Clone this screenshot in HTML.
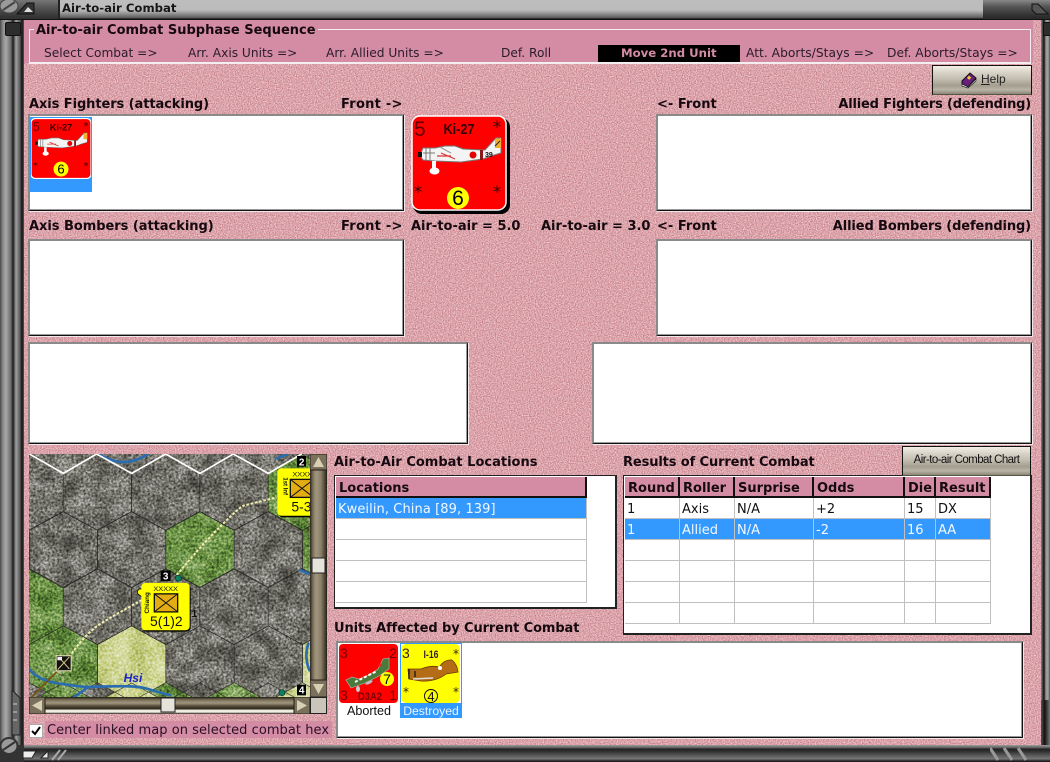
<!DOCTYPE html>
<html><head><meta charset="utf-8"><title>Air-to-air Combat</title>
<style>
html,body{margin:0;padding:0;background:#333}
#p{position:relative;width:1050px;height:762px;overflow:hidden;font-family:"DejaVu Sans","Liberation Sans",sans-serif;font-size:12px;color:#1a0d12}
#p div,#p span.t,#p svg.a{position:absolute}
.t{position:absolute;white-space:nowrap;line-height:15px}
.b{font-weight:bold;font-size:13px;color:#160a10}
.s{font-size:12.3px;color:#2a1c2a}
.box{background:#fff;box-sizing:border-box;border:2px solid;border-color:#8a8a8a #111 #111 #8a8a8a;border-right-width:1px;border-bottom-width:1px;box-shadow:inset -1px -1px 0 #999,1px 1px 0 #f3e6e8}
.box2{background:#fff;box-sizing:border-box;border:1px solid #222;border-right-width:2px;border-bottom-width:2px}
.th{background:#d48ca5;box-sizing:border-box;border-right:2px solid #111;border-bottom:2px solid #111;font-weight:bold;font-size:13px;line-height:23px;padding-left:3px;color:#160a10;white-space:nowrap}
.td{box-sizing:border-box;border-right:1px solid #c0c0c0;border-bottom:1px solid #c0c0c0;background:#fff;font-size:13px;line-height:23px;padding-left:2px;color:#111;white-space:nowrap}
.sel{background:#3399ff;color:#f2f8ff}
.btn{box-sizing:border-box;border:1px solid #111;border-bottom-color:#554;background:linear-gradient(#f3efe6 0%,#d6d1c5 25%,#c4bfb2 45%,#a39e8e 70%,#b9b4a6 85%,#8a8575 100%);text-align:center;color:#111;font-family:"Liberation Sans",sans-serif}
</style></head><body>
<div id="p">
<svg class="a" style="left:0;top:0" width="1050" height="762">
<defs><filter id="pn" x="0" y="0" width="100%" height="100%" color-interpolation-filters="sRGB">
<feTurbulence type="fractalNoise" baseFrequency="0.85" numOctaves="2" seed="4"/>
<feColorMatrix values="0.4 0 0 0 0.66  0.62 0 0 0 0.33  0.62 0 0 0 0.36  0 0 0 0 1"/></filter></defs>
<rect x="24" y="20" width="1017" height="725" fill="#d9a0a8" filter="url(#pn)"/>
</svg>

<!-- title bar -->
<div style="left:0;top:0;width:1050px;height:20px;background:linear-gradient(#bdbdbd 0%,#bcbcbc 50%,#9a9a9a 65%,#5e5e5e 88%,#111 95%,#111 100%)"></div>
<div style="left:0;top:0;width:59px;height:19px;background:linear-gradient(#777,#555 40%,#333 90%)"></div>
<div style="left:58px;top:0;width:2px;height:19px;background:#222"></div>
<div style="left:983px;top:0;width:67px;height:19px;background:linear-gradient(#888,#555 35%,#2b2b2b 90%)"></div>
<svg class="a" style="left:0;top:0" width="60" height="20"><ellipse cx="9" cy="6" rx="9" ry="7" fill="#999" stroke="#444"/><path d="M3 10L15 2" stroke="#444" stroke-width="2"/><path d="M17 14L27 3H34V14Z" fill="#333" stroke="#111"/><path d="M24 12L28 7 33 12Z" fill="#ddd"/></svg>
<svg class="a" style="left:1030px;top:0" width="20" height="20"><path d="M2 4H8L18 14H6L2 10Z" fill="#555" stroke="#111"/></svg>
<span class="t" style="left:62px;top:1px;font-size:11.7px;font-weight:bold;color:#161616">Air-to-air Combat</span>

<!-- left frame -->
<div style="left:0;top:20px;width:24px;height:725px;background:linear-gradient(90deg,#4a4a4a 0,#8c8c8c 3px,#a8a8a8 6px,#6a6a6a 11px,#1a1a1a 13px,#444 14px,#a0a0a0 16px,#5a5a5a 20px,#111 22px,#555 24px)"></div>
<div style="left:5px;top:22px;width:14px;height:12px;background:#2d2d2d;border:1px solid #111;border-radius:2px"></div>
<svg class="a" style="left:0;top:690px" width="24" height="72"><path d="M12 0L20 8V45H12Z" fill="#666" stroke="#222"/><path d="M13 14h4M13 22h4M13 30h4" stroke="#ccc"/><ellipse cx="9" cy="56" rx="8.500" ry="8" fill="#999" stroke="#333" stroke-width="2"/><path d="M3 60L15 52" stroke="#333" stroke-width="2"/><rect x="0" y="66" width="24" height="6" fill="#333"/></svg>
<!-- right frame -->
<div style="left:1041px;top:20px;width:9px;height:725px;background:linear-gradient(90deg,#888 0,#333 2px,#111 3px,#999 5px,#a0a0a0 7px,#555 9px)"></div>
<div style="left:1043px;top:22px;width:7px;height:12px;background:#2d2d2d;border:1px solid #111;border-right:0"></div>
<div style="left:1041px;top:700px;width:9px;height:62px;background:linear-gradient(90deg,#555,#111 40%,#777)"></div>
<!-- bottom frame -->
<div style="left:24px;top:745px;width:1026px;height:17px;background:linear-gradient(#999 0,#888 1px,#555 3px,#222 4px,#2d2d2d 6px,#555 10px,#777 14px,#444 15px,#111 17px)"></div>
<svg class="a" style="left:20px;top:746px" width="100" height="16"><path d="M3 5H16L12 12H3Z" fill="#eee" stroke="#222"/><path d="M21 12L28 5V12Z" fill="#eee" stroke="#222"/><path d="M32 14L40 4M38 14L46 4" stroke="#aaa" stroke-width="2"/></svg>
<svg class="a" style="left:990px;top:746px" width="52" height="16"><path d="M0 2L8 14M14 2L22 14M28 2L36 14" stroke="#999" stroke-width="3"/></svg>

<!-- sequence group -->
<div style="left:24px;top:20px;width:1009px;height:43px;background:#d48ca5"></div>
<div style="left:29px;top:29px;width:1002px;height:35px;border:1px solid #f4eef0;border-bottom-width:2px;box-sizing:border-box"></div>
<span class="t" style="left:34px;top:23px;background:#d48ca5;padding:0 2px;font-size:13px;font-weight:bold;color:#160a10">Air-to-air Combat Subphase Sequence</span>
<span class="t s" style="left:44px;top:46px;font-size:12.2px">Select Combat =&gt;</span>
<span class="t s" style="left:188px;top:46px;font-size:12.2px">Arr. Axis Units =&gt;</span>
<span class="t s" style="left:326px;top:46px;font-size:12.2px">Arr. Allied Units =&gt;</span>
<span class="t s" style="left:501px;top:46px;font-size:12.2px">Def. Roll</span>
<div style="left:598px;top:45px;width:142px;height:17px;background:#000"></div>
<span class="t" style="left:621px;top:46px;font-size:11.7px;font-weight:bold;color:#d48ca5">Move 2nd Unit</span>
<span class="t s" style="left:746px;top:46px">Att. Aborts/Stays =&gt;</span>
<span class="t s" style="left:887px;top:46px">Def. Aborts/Stays =&gt;</span>

<!-- help -->
<div class="btn" style="left:932px;top:65px;width:100px;height:30px"></div>
<svg class="a" style="left:960px;top:71px" width="18" height="18"><path d="M2 10L10 2 16 7 8 16 2 13Z" fill="#6a1f7a" stroke="#111"/><path d="M2 13L8 16 16 8V10L8 17 2 15Z" fill="#eee" stroke="#111" stroke-width=".6"/><rect x="8" y="5" width="3" height="3" fill="#ec3" transform="rotate(40 9 6)"/></svg>
<span class="t" style="left:981px;top:72px;font-family:'Liberation Sans',sans-serif;font-size:12px;color:#222"><u>H</u>elp</span>

<!-- headings -->
<span class="t b" style="left:29px;top:97px;letter-spacing:-.08px">Axis Fighters (attacking)</span>
<span class="t b" style="left:341px;top:97px;letter-spacing:.25px">Front -&gt;</span>
<span class="t b" style="left:657px;top:97px">&lt;- Front</span>
<span class="t b" style="right:19px;top:97px;letter-spacing:-.19px">Allied Fighters (defending)</span>
<span class="t b" style="left:29px;top:219px;letter-spacing:-.04px">Axis Bombers (attacking)</span>
<span class="t b" style="left:341px;top:219px;letter-spacing:.25px">Front -&gt;</span>
<span class="t b" style="left:411px;top:219px">Air-to-air = 5.0</span>
<span class="t b" style="left:541px;top:219px">Air-to-air = 3.0</span>
<span class="t b" style="left:657px;top:219px">&lt;- Front</span>
<span class="t b" style="right:19px;top:219px;letter-spacing:-.12px">Allied Bombers (defending)</span>

<!-- boxes -->
<div class="box" style="left:28px;top:114px;width:376px;height:97px"></div>
<div class="box" style="left:656px;top:114px;width:376px;height:97px"></div>
<div class="box" style="left:28px;top:239px;width:376px;height:97px"></div>
<div class="box" style="left:656px;top:239px;width:376px;height:97px"></div>
<div class="box" style="left:28px;top:342px;width:440px;height:102px"></div>
<div class="box" style="left:592px;top:342px;width:440px;height:102px"></div>

<!-- small Ki-27 -->
<div style="left:30px;top:117px;width:62px;height:62px;background:#3399ff"></div>
<div style="left:30px;top:179px;width:62px;height:13px;background:#3399ff"></div>
<svg class="a" style="left:31px;top:118px" width="60" height="61" viewBox="0 0 96 96">
<rect width="96" height="96" rx="7" fill="#fe0000" stroke="#fff" stroke-width="2"/>
<path d="M10 38L12 33 24 33 29 32 34 31 44 31 52 34 72 35 74 35 85 23 90 23 90 38 80 41 72 44 50 47 24 46 12 45 10 42Z" fill="#f4f4f4" stroke="#666"/>
<path d="M84 24L90 23 90 33 84 33Z" fill="#eeb030"/><circle cx="62" cy="40" r="4" fill="#e40000"/><rect x="69" y="35" width="3" height="10" fill="#8a1818"/><path d="M7 37h4v5H7z" fill="#111"/><path d="M15 33V45M19 33V45" stroke="#777"/><path d="M26 41H40M30 38L44 44" stroke="#d33" stroke-width="1.200"/><path d="M23 46V54" stroke="#fff" stroke-width="4"/><ellipse cx="23.500" cy="56" rx="5" ry="3.500" fill="#fff"/>
<circle cx="48" cy="81" r="12" fill="#ff0"/>
<text x="48" y="88" text-anchor="middle" font-family="Liberation Sans" font-size="21">6</text>
<text x="3" y="20" font-family="Liberation Sans" font-size="20" fill="#700">5</text>
<text x="48" y="19" text-anchor="middle" font-family="Liberation Sans" font-weight="bold" font-size="15" fill="#300" textLength="36" lengthAdjust="spacingAndGlyphs">Ki-27</text>
<text x="92" y="17" text-anchor="end" font-size="16" fill="#300">*</text><text x="3" y="81" font-size="16" fill="#300">*</text><text x="92" y="81" text-anchor="end" font-size="16" fill="#300">*</text>
</svg>

<!-- large Ki-27 -->
<div style="left:413px;top:118px;width:97px;height:96px;background:#000;border-radius:9px"></div>
<svg class="a" style="left:411px;top:115px" width="96" height="96" viewBox="0 0 96 96">
<rect x="1" y="1" width="94" height="94" rx="8" fill="#fe0000" stroke="#fff" stroke-width="1.500"/>
<path d="M10 38L12 33 24 33 29 32 34 31 44 31 52 34 72 35 74 35 85 23 90 23 90 38 80 41 72 44 50 47 24 46 12 45 10 42Z" fill="#f4f4f4" stroke="#777"/>
<path d="M84 24L90 23 90 33 84 33Z" fill="#eeb030"/><path d="M84 31L89 26" stroke="#222"/><circle cx="62" cy="40" r="3.500" fill="#e40000"/><rect x="69" y="35" width="3" height="10" fill="#8a1818"/><path d="M7 37h4v5H7z" fill="#111"/><path d="M15 33V45M19 33V45M12 38H24" stroke="#777"/><path d="M26 41H40M30 38L44 44" stroke="#d33" stroke-width="1.200"/><path d="M29 32L40 38" stroke="#999"/><path d="M23 46V54" stroke="#fff" stroke-width="4"/><ellipse cx="23.500" cy="56" rx="5" ry="3.500" fill="#fff"/>
<text x="74" y="42" font-family="Liberation Sans" font-weight="bold" font-size="7" fill="#111">39</text>
<circle cx="47" cy="83" r="11" fill="#ff0"/>
<text x="47" y="90" text-anchor="middle" font-family="Liberation Sans" font-size="21">6</text>
<text x="3" y="21" font-family="Liberation Sans" font-size="21" fill="#600">5</text>
<text x="48" y="19" text-anchor="middle" font-family="Liberation Sans" font-weight="bold" font-size="15" fill="#300" textLength="31" lengthAdjust="spacingAndGlyphs">Ki-27</text>
<text x="90" y="17" text-anchor="end" font-size="16" fill="#300">*</text><text x="3" y="82" font-size="16" fill="#300">*</text><text x="90" y="82" text-anchor="end" font-size="16" fill="#300">*</text>
</svg>

<!-- map -->
<svg class="a" style="left:29px;top:454px" width="281" height="243" viewBox="87 42 843 728" preserveAspectRatio="none">
<defs>
<polygon id="h" points="0,-113 102.5,-57 102.5,57 0,113 -102.500,57 -102.500,-57"/>
<filter id="mn" x="0" y="0" width="100%" height="100%" color-interpolation-filters="sRGB">
<feTurbulence type="fractalNoise" baseFrequency="0.14" numOctaves="3" seed="8"/>
<feColorMatrix values="1.400 0 0 0 -0.2  1.400 0 0 0 -0.2  1.400 0 0 0 -0.2  0 0 0 0 1"/></filter>
<filter id="mb" x="0" y="0" width="100%" height="100%" color-interpolation-filters="sRGB">
<feTurbulence type="fractalNoise" baseFrequency="0.018" numOctaves="2" seed="3"/>
<feColorMatrix values="1.800 0 0 0 -0.4  1.800 0 0 0 -0.4  1.800 0 0 0 -0.4  0 0 0 0 1"/></filter>
<clipPath id="mc"><rect x="87" y="42" width="843" height="728"/></clipPath>
</defs>
<g clip-path="url(#mc)">
<rect x="87" y="42" width="843" height="728" fill="#73726a"/>
<g fill="#73726a">
<use href="#h" x="190" y="-14"/><use href="#h" x="395" y="-14"/><use href="#h" x="600" y="-14"/><use href="#h" x="805" y="-14"/>
</g>
<g fill="#6e9448">
<use href="#h" x="907" y="157"/><use href="#h" x="600" y="328"/><use href="#h" x="1010" y="328"/><use href="#h" x="87" y="500"/><use href="#h" x="190" y="670"/><use href="#h" x="190" y="841"/><use href="#h" x="497" y="841"/><use href="#h" x="702" y="841"/><use href="#h" x="-15" y="670"/>
</g>
<g fill="#cdd490">
<use href="#h" x="395" y="670"/><use href="#h" x="1010" y="670"/><use href="#h" x="395" y="841"/><use href="#h" x="907" y="841"/>
</g>
<rect x="87" y="42" width="843" height="728" fill="#888" filter="url(#mb)" style="mix-blend-mode:soft-light" opacity=".55"/>
<rect x="87" y="42" width="843" height="728" fill="#888" filter="url(#mn)" style="mix-blend-mode:overlay" opacity=".65"/>
<g fill="none" stroke="#222" stroke-width="1.600">
<use href="#h" x="87" y="157"/><use href="#h" x="292" y="157"/><use href="#h" x="497" y="157"/><use href="#h" x="702" y="157"/><use href="#h" x="907" y="157"/>
<use href="#h" x="-15" y="328"/><use href="#h" x="190" y="328"/><use href="#h" x="395" y="328"/><use href="#h" x="600" y="328"/><use href="#h" x="805" y="328"/><use href="#h" x="1010" y="328"/>
<use href="#h" x="87" y="500"/><use href="#h" x="292" y="500"/><use href="#h" x="497" y="500"/><use href="#h" x="702" y="500"/><use href="#h" x="907" y="500"/>
<use href="#h" x="190" y="670"/><use href="#h" x="395" y="670"/><use href="#h" x="600" y="670"/><use href="#h" x="805" y="670"/><use href="#h" x="1010" y="670"/>
<use href="#h" x="190" y="841"/><use href="#h" x="395" y="841"/><use href="#h" x="600" y="841"/><use href="#h" x="805" y="841"/>
</g>
<g fill="none" stroke="#2a6cb0" stroke-width="8" stroke-linecap="round" stroke-linejoin="round">
<path d="M300 45Q340 68 375 66T445 42M832 55L862 42"/>
<path d="M87 685Q110 720 180 730T260 740 340 738 440 745 510 765"/>
<path d="M220 772L262 742M900 390L930 402M925 610Q912 650 928 690"/>
</g>
<path d="M95 770L170 695" stroke="#7a4f14" stroke-width="5"/>
<path d="M215 640Q260 575 310 545T425 480" fill="none" stroke="#f2eeb0" stroke-width="6" stroke-dasharray="8 5"/>
<path d="M530 405Q600 320 660 260T730 197 830 172" fill="none" stroke="#f2eeb0" stroke-width="6" stroke-dasharray="8 5"/>
<path d="M88 42L190 100 290 42 395 100 497 42 600 100 700 42 805 100 905 42" fill="none" stroke="#fff" stroke-width="5"/>
<rect x="167" y="645" width="48" height="48" fill="#f2e7bd"/><rect x="170" y="648" width="42" height="42" fill="#111"/><path d="M173 688L208 650M178 652L208 686" stroke="#d8c480" stroke-width="3"/><path d="M172 650h14v10h-14z" fill="#eee"/>
<text x="184" y="709" text-anchor="middle" font-family="Liberation Sans" font-size="11" fill="#111">Tin</text>
<text x="399" y="725" text-anchor="middle" font-family="Liberation Sans" font-style="italic" font-weight="bold" font-size="36" fill="#1a22c8">Hsi</text>
<text x="575" y="530" font-family="Liberation Sans" font-weight="bold" font-size="30" fill="#111">1</text>
<rect x="891" y="48" width="27" height="32" fill="#000"/><text x="905" y="76" text-anchor="middle" font-family="Liberation Sans" font-weight="bold" font-size="30" fill="#fff">2</text>
<rect x="482" y="391" width="30" height="32" fill="#000"/><text x="497" y="418" text-anchor="middle" font-family="Liberation Sans" font-weight="bold" font-size="30" fill="#fff">3</text>
<rect x="891" y="733" width="27" height="32" fill="#000"/><text x="905" y="760" text-anchor="middle" font-family="Liberation Sans" font-weight="bold" font-size="30" fill="#fff">4</text>
<circle cx="535" cy="414" r="9" fill="#0d8060" stroke="#033" stroke-width="2"/><circle cx="846" cy="757" r="9" fill="#0d8060" stroke="#033" stroke-width="2"/>
<!-- Chiang -->
<path d="M414 462a10 10 0 0 1 14-14v24z" fill="#ff0" stroke="#111" stroke-width="3"/>
<rect x="428" y="432" width="144" height="142" rx="12" fill="#000"/>
<rect x="424" y="428" width="145" height="142" rx="12" fill="#ff0"/>
<text x="497" y="452" text-anchor="middle" font-family="Liberation Sans" font-size="20" fill="#111" textLength="74" lengthAdjust="spacingAndGlyphs">XXXXX</text>
<rect x="463" y="461" width="70" height="54" fill="#e2ac12" stroke="#111" stroke-width="4"/><path d="M463 461L533 515M533 461L463 515" stroke="#111" stroke-width="3"/>
<text transform="translate(447,520) rotate(-90)" font-family="Liberation Sans" font-weight="bold" font-size="18" fill="#111" textLength="64" lengthAdjust="spacingAndGlyphs">Chiang</text>
<text x="499" y="558" text-anchor="middle" font-family="Liberation Sans" font-size="42" fill="#111">5(1)2</text>
<!-- 1st Inf -->
<rect x="836" y="90" width="110" height="142" rx="12" fill="#000"/>
<rect x="832" y="85" width="110" height="142" rx="12" fill="#ff0"/>
<text x="877" y="109" font-family="Liberation Sans" font-size="20" fill="#111" textLength="74" lengthAdjust="spacingAndGlyphs">XXXXX</text>
<rect x="871" y="118" width="70" height="54" fill="#e2ac12" stroke="#111" stroke-width="4"/><path d="M871 118L941 172M941 118L871 172" stroke="#111" stroke-width="3"/>
<text transform="translate(850,112) rotate(90)" font-family="Liberation Sans" font-weight="bold" font-size="18" fill="#111">1st Inf</text>
<text x="874" y="215" font-family="Liberation Sans" font-size="42" fill="#111">5-3</text>
</g>
</svg>

<!-- v scrollbar -->
<div style="left:310px;top:454px;width:17px;height:243px;background:linear-gradient(90deg,#2b261b,#7d715a 3px,#a1967f 6px,#8b7f68 11px,#4a4233 15px,#221e15)"></div>
<svg class="a" style="left:310px;top:454px" width="17" height="243"><rect width="17" height="16" fill="#7a705b" stroke="#221e15"/><path d="M8.500 3L14 13H3Z" fill="#d7d0b5"/><rect y="226" width="17" height="17" fill="#7a705b" stroke="#221e15"/><path d="M8.500 240L14 230H3Z" fill="#d7d0b5"/><rect x="2" y="104" width="13" height="15" fill="#e6e3da" stroke="#222"/></svg>
<!-- h scrollbar -->
<div style="left:29px;top:697px;width:281px;height:17px;background:linear-gradient(#221e15,#7d715a 3px,#a1967f 6px,#574e3d 9px,#2a2519 12px,#e9e6da 13px,#f2f0e6 15px,#221e15)"></div>
<svg class="a" style="left:29px;top:697px" width="281" height="17"><rect width="16" height="17" fill="#7a705b" stroke="#221e15"/><path d="M3 8.500L13 3V14Z" fill="#d7d0b5"/><rect x="265" width="16" height="17" fill="#7a705b" stroke="#221e15"/><path d="M278 8.500L268 3V14Z" fill="#d7d0b5"/><rect x="132" y="1" width="14" height="14" fill="#e6e3da" stroke="#222"/></svg>
<div style="left:310px;top:697px;width:17px;height:17px;background:#c9c5bb;border:1px solid #222;box-sizing:border-box"></div>

<!-- checkbox -->
<div style="left:45px;top:721px;width:287px;height:17px;background:#d48ca5"></div>
<div style="left:29px;top:724px;width:12px;height:12px;background:#fff;border:1px solid #aaa"></div>
<svg class="a" style="left:30px;top:725px" width="12" height="12"><path d="M2 6L5 9 10 2" fill="none" stroke="#000" stroke-width="2"/></svg>
<span class="t s" style="left:47px;top:723px;font-size:13px;letter-spacing:.05px;color:#2a0f24">Center linked map on selected combat hex</span>

<!-- locations -->
<span class="t b" style="left:334px;top:455px">Air-to-Air Combat Locations</span>
<div class="box2" style="left:334px;top:475px;width:283px;height:134px"></div>
<div class="th" style="left:336px;top:477px;width:251px;height:21px">Locations</div>
<div class="td sel" style="left:336px;top:498px;width:251px;height:21px;border-color:#c0c0c0;letter-spacing:.09px">Kweilin, China [89, 139]</div>
<div class="td" style="left:336px;top:519px;width:251px;height:21px"></div>
<div class="td" style="left:336px;top:540px;width:251px;height:21px"></div>
<div class="td" style="left:336px;top:561px;width:251px;height:21px"></div>
<div class="td" style="left:336px;top:582px;width:251px;height:21px"></div>

<!-- results -->
<span class="t b" style="left:623px;top:455px;letter-spacing:-.12px">Results of Current Combat</span>
<div class="box2" style="left:623px;top:475px;width:409px;height:160px"></div>
<div class="th" style="left:625px;top:477px;width:55px;height:21px">Round</div>
<div class="th" style="left:680px;top:477px;width:55px;height:21px">Roller</div>
<div class="th" style="left:735px;top:477px;width:79px;height:21px">Surprise</div>
<div class="th" style="left:814px;top:477px;width:91px;height:21px">Odds</div>
<div class="th" style="left:905px;top:477px;width:31px;height:21px">Die</div>
<div class="th" style="left:936px;top:477px;width:55px;height:21px">Result</div>

<div class="td" style="left:625px;top:498px;width:55px;height:21px">1</div><div class="td" style="left:680px;top:498px;width:55px;height:21px">Axis</div><div class="td" style="left:735px;top:498px;width:79px;height:21px">N/A</div><div class="td" style="left:814px;top:498px;width:91px;height:21px">+2</div><div class="td" style="left:905px;top:498px;width:31px;height:21px">15</div><div class="td" style="left:936px;top:498px;width:55px;height:21px">DX</div>
<div class="td sel" style="left:625px;top:519px;width:55px;height:21px">1</div><div class="td sel" style="left:680px;top:519px;width:55px;height:21px">Allied</div><div class="td sel" style="left:735px;top:519px;width:79px;height:21px">N/A</div><div class="td sel" style="left:814px;top:519px;width:91px;height:21px">-2</div><div class="td sel" style="left:905px;top:519px;width:31px;height:21px">16</div><div class="td sel" style="left:936px;top:519px;width:55px;height:21px">AA</div>
<div class="td" style="left:625px;top:540px;width:55px;height:21px"></div><div class="td" style="left:680px;top:540px;width:55px;height:21px"></div><div class="td" style="left:735px;top:540px;width:79px;height:21px"></div><div class="td" style="left:814px;top:540px;width:91px;height:21px"></div><div class="td" style="left:905px;top:540px;width:31px;height:21px"></div><div class="td" style="left:936px;top:540px;width:55px;height:21px"></div>
<div class="td" style="left:625px;top:561px;width:55px;height:21px"></div><div class="td" style="left:680px;top:561px;width:55px;height:21px"></div><div class="td" style="left:735px;top:561px;width:79px;height:21px"></div><div class="td" style="left:814px;top:561px;width:91px;height:21px"></div><div class="td" style="left:905px;top:561px;width:31px;height:21px"></div><div class="td" style="left:936px;top:561px;width:55px;height:21px"></div>
<div class="td" style="left:625px;top:582px;width:55px;height:21px"></div><div class="td" style="left:680px;top:582px;width:55px;height:21px"></div><div class="td" style="left:735px;top:582px;width:79px;height:21px"></div><div class="td" style="left:814px;top:582px;width:91px;height:21px"></div><div class="td" style="left:905px;top:582px;width:31px;height:21px"></div><div class="td" style="left:936px;top:582px;width:55px;height:21px"></div>
<div class="td" style="left:625px;top:603px;width:55px;height:21px"></div><div class="td" style="left:680px;top:603px;width:55px;height:21px"></div><div class="td" style="left:735px;top:603px;width:79px;height:21px"></div><div class="td" style="left:814px;top:603px;width:91px;height:21px"></div><div class="td" style="left:905px;top:603px;width:31px;height:21px"></div><div class="td" style="left:936px;top:603px;width:55px;height:21px"></div>

<div class="btn" style="left:902px;top:446px;width:129px;height:30px;font-size:11.5px;line-height:27px;letter-spacing:-.57px">Air-to-air Combat Chart</div>

<!-- units affected -->
<span class="t b" style="left:334px;top:621px;letter-spacing:-.1px">Units Affected by Current Combat</span>
<div class="box" style="left:336px;top:641px;width:687px;height:97px"></div>
<svg class="a" style="left:339px;top:644px" width="60" height="60" viewBox="0 0 60 60">
<rect width="59" height="59" rx="4" fill="#fe0000"/>
<path d="M7 36L13 33 20 35 30 31 39 25 44 15 50 14 50 25 40 32 26 39 12 44Z" fill="#4a7a3a" stroke="#bbb" stroke-width=".6"/><path d="M16 38L38 27" stroke="#fff" stroke-width="2" stroke-dasharray="3 2"/><circle cx="41" cy="21" r="1.500" fill="#e22"/><ellipse cx="30" cy="38.500" rx="4" ry="1.500" fill="#bbb" transform="rotate(-25 30 38.500)"/><ellipse cx="19" cy="45" rx="2" ry="3" fill="#ccc"/><circle cx="48" cy="35" r="7" fill="#ff0"/>
<text x="48" y="40" text-anchor="middle" font-family="Liberation Sans" font-size="14" fill="#111">7</text>
<text x="1" y="14" font-family="Liberation Sans" font-size="14" fill="#700">3</text><text x="58" y="14" text-anchor="end" font-family="Liberation Sans" font-size="14" fill="#700">2</text><text x="1" y="56" font-family="Liberation Sans" font-size="14" fill="#700">3</text><text x="58" y="56" text-anchor="end" font-family="Liberation Sans" font-size="14" fill="#700">1</text>
<text x="31" y="56" text-anchor="middle" font-family="Liberation Sans" font-weight="bold" font-size="11" fill="#700" textLength="24" lengthAdjust="spacingAndGlyphs">D3A2</text></svg>
<span class="t" style="left:339px;top:704px;width:60px;text-align:center;font-family:'Liberation Sans',sans-serif;font-size:12.6px;color:#111">Aborted</span>
<div style="left:400px;top:643px;width:62px;height:75px;background:#3399ff"></div>
<div style="left:401px;top:644px;width:60px;height:59px;background:#fff"></div>
<svg class="a" style="left:401px;top:644px" width="60" height="60" viewBox="0 0 60 60">
<rect width="59" height="59" rx="5" fill="#ff0"/>
<path d="M7 25L20 25Q30 21 38 23Q44 15 51 16Q56 20 57 28L45 30Q35 38 20 37L8 35Z" fill="#b56c16" stroke="#6a3a08" stroke-width=".8"/><circle cx="39" cy="24" r="2" fill="#fff"/><path d="M12 35L32 34" stroke="#ddd" stroke-width="1.500"/><path d="M8 25V35M14 27V33" stroke="#222" stroke-width="1.500"/>
<circle cx="30" cy="52" r="6.500" fill="none" stroke="#111"/><text x="30" y="57" text-anchor="middle" font-family="Liberation Sans" font-size="13" fill="#111">4</text>
<text x="1" y="14" font-family="Liberation Sans" font-size="14" fill="#322">3</text>
<text x="30" y="14" text-anchor="middle" font-family="Liberation Sans" font-weight="bold" font-size="11" fill="#322" textLength="15" lengthAdjust="spacingAndGlyphs">I-16</text>
<text x="58" y="14" text-anchor="end" font-size="12" fill="#322">*</text><text x="2" y="52" font-size="12" fill="#322">*</text><text x="58" y="52" text-anchor="end" font-size="12" fill="#322">*</text></svg>
<span class="t" style="left:400px;top:704px;width:62px;text-align:center;font-family:'Liberation Sans',sans-serif;font-size:12.2px;color:#eaf4ff">Destroyed</span>
</div>
</body></html>
